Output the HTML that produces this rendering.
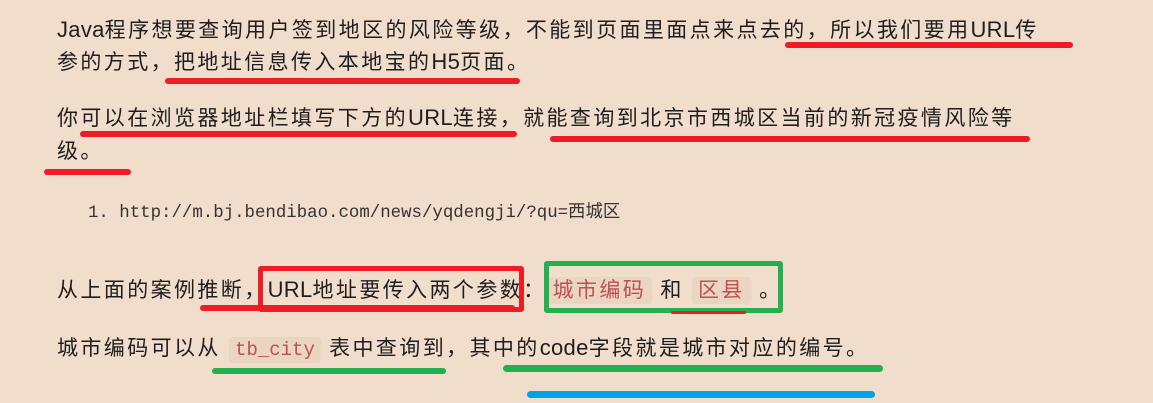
<!DOCTYPE html>
<html><head><meta charset="utf-8"><style>
body{margin:0;width:1153px;height:403px;background:#f1ddcb;overflow:hidden;position:relative;font-family:"Liberation Sans","Noto Sans CJK SC",sans-serif;color:#1e1e1e}
.t{position:absolute;left:57px;font-size:21px;letter-spacing:2.4px;white-space:nowrap;line-height:28px}
.l{letter-spacing:0.3px;font-size:22px}
.c{position:absolute;left:88px;top:198px;font-family:"Liberation Mono","Noto Sans CJK SC",monospace;font-size:17.4px;color:#333;white-space:nowrap}
.ic{background:#ead4c2;color:#c0504d;border-radius:4px;padding:2px 6px}
.icm{font-family:"Liberation Mono",monospace;font-size:19px;letter-spacing:0}
.r{position:absolute;border-radius:4px}
.red{background:#ee1c25}.grn{background:#22b14c}.blu{background:#00a2e8}
.box{position:absolute;border:5px solid;border-radius:3px;box-sizing:border-box}
</style></head><body>
<div class="t" style="top:16px"><span class="l">Java</span>程序想要查询用户签到地区的风险等级，不能到页面里面点来点去的，所以我们要用<span class="l">URL</span>传</div>
<div class="t" style="top:48px">参的方式，把地址信息传入本地宝的<span class="l">H5</span>页面。</div>
<div class="t" style="top:104px">你可以在浏览器地址栏填写下方的<span class="l">URL</span>连接，就能查询到北京市西城区当前的新冠疫情风险等</div>
<div class="t" style="top:138px">级。</div>
<div class="c">1. http://m.bj.bendibao.com/news/yqdengji/?qu=西城区</div>
<div class="t" style="top:276px">从上面的案例推断，<span class="l">URL</span>地址要传入两个参数：<span class="ic">城市编码</span> 和 <span class="ic">区县</span> 。</div>
<div class="t" style="top:334px">城市编码可以从 <span class="ic icm">tb_city</span> 表中查询到，其中的<span class="l">code</span>字段就是城市对应的编号。</div>

<div class="r red" style="left:785px;top:42px;width:288px;height:6px"></div>
<div class="r red" style="left:165px;top:78px;width:355px;height:6px"></div>
<div class="r red" style="left:80px;top:131px;width:437px;height:6px"></div>
<div class="r red" style="left:550px;top:136px;width:480px;height:6px"></div>
<div class="r red" style="left:44px;top:169px;width:87px;height:6px"></div>
<div class="box" style="left:258px;top:266px;width:266px;height:46px;border-color:#ee1c25"></div>
<div class="r red" style="left:200px;top:305px;width:315px;height:6px"></div>
<div class="box" style="left:544px;top:261px;width:239px;height:52px;border-color:#22b14c"></div>
<div class="r red" style="left:671px;top:311px;width:75px;height:3px"></div>
<div class="r grn" style="left:212px;top:368px;width:234px;height:6px"></div>
<div class="r grn" style="left:503px;top:365px;width:380px;height:7px"></div>
<div class="r blu" style="left:527px;top:391px;width:348px;height:7px"></div>
</body></html>
